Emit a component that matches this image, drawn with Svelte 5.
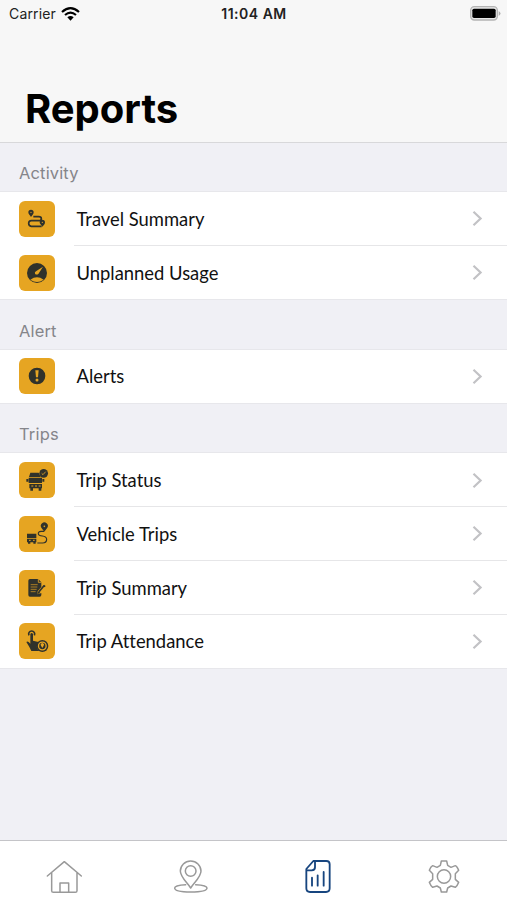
<script>
    // Report groups shown in the list
    const sections = [
        {
            title: "Activity",
            items: [
                { label: "Travel Summary", icon: "travel" },
                { label: "Unplanned Usage", icon: "gauge" },
            ],
        },
        {
            title: "Alert",
            items: [{ label: "Alerts", icon: "alert" }],
        },
        {
            title: "Trips",
            items: [
                { label: "Trip Status", icon: "status" },
                { label: "Vehicle Trips", icon: "vehicle" },
                { label: "Trip Summary", icon: "summary" },
                { label: "Trip Attendance", icon: "attendance" },
            ],
        },
    ];

    const tabs = ["home", "map", "reports", "settings"];
    let activeTab = "reports";
</script>

<div class="screen">
    <header>
        <!-- Status bar -->
        <div class="status-bar">
            <div class="carrier">
                <span>Carrier</span>
                <svg width="19" height="14" viewBox="0 0 57 42">
                    <g fill="none" stroke="#000" stroke-width="6.5">
                        <path d="M3 15 Q28.5 -8 54 15" />
                        <path d="M12 24 Q28.5 10 45 24" />
                    </g>
                    <path d="M19 31 Q28.5 23 38 31 L28.5 41 Z" />
                </svg>
            </div>
            <span class="time">11:04 AM</span>
            <svg class="battery" width="31" height="15" viewBox="0 0 93 45">
                <rect x="2" y="2" width="80" height="40" rx="11" fill="#e8e8e8" stroke="#b4b4b4" stroke-width="4" />
                <rect x="7" y="8" width="70" height="28" rx="5" />
                <path d="M86 15 Q97 22 86 30 Z" fill="#adadad" />
            </svg>
        </div>
        <h1>Reports</h1>
    </header>

    <main>
        {#each sections as section}
            <section>
                <h2>{section.title}</h2>
                <div class="rows">
                    {#each section.items as item}
                        <button class="row">
                            <svg class="tile" viewBox="0 0 108 108">
                                {#if item.icon === "travel"}
                                    <path d="M36 48 C32 42 28 39 28 34 A8 8 0 0 1 44 34 C44 39 40 43 36 48 Z M70 77 C65 70 62 68 62 64 A8 8 0 0 1 78 64 C78 69 75 72 70 77 Z" />
                                    <path d="M43 47 H59 Q67 47 67 53 T59 59 H37 Q29 59 29 67 T37 76 H68" class="line" />
                                    <g fill="#e6a522"><circle cx="36" cy="34" r="2" /><circle cx="70" cy="64" r="2" /></g>
                                {:else if item.icon === "gauge"}
                                    <circle cx="54" cy="54" r="30" />
                                    <path d="M34 74 Q54 60 74 74 Q54 88 34 74 Z" fill="#e6a522" />
                                    <path d="M72 35 L58 57 Q52 61 48 56 Q46 52 51 49 Z" fill="#e6a522" />
                                {:else if item.icon === "alert"}
                                    <circle cx="54" cy="54" r="25" />
                                    <path d="M49 37 H59 L57 58 H51 Z" fill="#e6a522" />
                                    <circle cx="54" cy="66" r="4.5" fill="#e6a522" />
                                {:else if item.icon === "status"}
                                    <path d="M34 32 H59 L65 45 H30 Z M29 47 H69 V63 H29 Z M31 66 H69 V79 H31 Z M34 79 H42 V86 H34 Z M59 79 H67 V86 H59 Z M22 51 H28 V59 H22 Z M70 51 H76 V59 H70 Z" />
                                    <path d="M37 72 H43 M48 72 H54 M59 72 H65" stroke="#e6a522" stroke-width="3" />
                                    <circle cx="74" cy="34" r="13" />
                                    <path d="M68 34 L72 38 L80 29" fill="none" stroke="#e6a522" stroke-width="2.5" />
                                {:else if item.icon === "vehicle"}
                                    <path d="M24 53 H52 V66 H24 Z M24 68 H52 V79 H24 Z M27 78 H34 V83 H27 Z M43 78 H50 V83 H43 Z" />
                                    <path d="M30 73 H35 M42 73 H47" stroke="#e6a522" stroke-width="3" />
                                    <path d="M76 47 L67 35 A10.500 10.500 0 1 1 85 35 Z" />
                                    <circle cx="76" cy="31" r="2.5" fill="#e6a522" />
                                    <path d="M75 46 H66 Q57 47 58 54 Q59 59 70 60 Q83 61 83 71 Q82 81 71 81 H55" class="line thin" />
                                {:else if item.icon === "summary"}
                                    <path d="M33 27 H58 L67 37 V51 L56 64 V73 L67 69 V75 Q67 80 62 80 H33 Q28 80 28 75 V32 Q28 27 33 27 Z" />
                                    <path d="M35 44 H56 M35 51 H55 M35 58 H53 M35 65 H50" stroke="#e6a522" stroke-width="2" />
                                    <path d="M60 65 L75 47" class="line" />
                                    <path d="M56 72 L58 63 L64 69 Z M75 44 L80 48 L77 52 L72 48 Z" />
                                    <path d="M58 27 V37 H67" fill="none" stroke="#e6a522" stroke-width="2.5" />
                                {:else}
                                    <path d="M30 37 A9 9 0 1 1 46 37" class="line" />
                                    <path d="M34 33 Q38 27 42 33 V53 L58 57 Q48 72 60 84 H37 Q33 74 22 57 Q26 53 34 62 Z" />
                                    <circle cx="70" cy="69" r="18" />
                                    <circle cx="70" cy="69" r="11.5" fill="none" stroke="#e6a522" stroke-width="4" />
                                    <path d="M70 75 L66 68 A5 5 0 1 1 74 68 Z" fill="#e6a522" />
                                {/if}
                            </svg>
                            <span class="label">
                                {item.label}
                                <svg class="chevron" width="11" height="17" viewBox="0 0 11 17">
                                    <path d="M1.5 1.7 L8.6 8.5 L1.5 15.3" />
                                </svg>
                            </span>
                        </button>
                    {/each}
                </div>
            </section>
        {/each}
    </main>

    <!-- Bottom tabs -->
    <nav>
        {#each tabs as tab}
            <button class="tab" class:active={activeTab === tab} aria-label={tab} on:click={() => (activeTab = tab)}>
                <svg width="38" height="38" viewBox="0 0 114 114">
                    {#if tab === "home"}
                        <path d="M7 54 L58 11 L109 54 M20 45 V98 Q20 103 25 103 H91 Q96 103 96 98 V45 M45 103 V75 H71 V103" />
                    {:else if tab === "map"}
                        <path d="M56 90 C46 74 25 57 25 39 A31 30 0 0 1 87 39 C87 57 66 74 56 90 Z" />
                        <circle cx="56" cy="39" r="16" />
                        <path d="M41 80 C19 81 8 85 8 90 C8 98 29 102 56 102 S105 98 105 90 C105 85 94 81 71 80" />
                    {:else if tab === "reports"}
                        <path d="M43 9 H82 Q92 9 92 19 V91 Q92 102 81 102 H33 Q22 102 22 91 V33 Z M48 10 V28 Q48 37 38 37 H23 M39 59 V83 M56 52 V83 M74 42 V83" />
                    {:else}
                        <path d="M46 9 H62 L65 22 L75 28 L88 23 Q93 24 98 37 L88 47 V64 L98 73 Q94 84 88 88 L75 84 L65 90 L62 102 H46 L43 90 L33 84 L20 88 Q14 84 10 73 L20 64 V47 L10 37 Q14 26 20 23 L33 28 L43 22 Z" />
                        <circle cx="54" cy="55.5" r="20" />
                    {/if}
                </svg>
            </button>
        {/each}
    </nav>
</div>

<style>
    :global(body) {
        margin: 0;
    }

    .screen {
        display: flex;
        flex-direction: column;
        width: 100%;
        height: 900px;
        background: #f0f0f5;
        font-family: Inter, "Liberation Sans", sans-serif;
        overflow: hidden;
    }

    header {
        box-sizing: border-box;
        height: 143px;
        background: #f7f7f7;
        border-bottom: 1px solid #d8d8da;
    }

    .status-bar {
        display: grid;
        grid-template-columns: 1fr auto 1fr;
        align-items: center;
        height: 27px;
        padding: 0 6px 0 9px;
        font-size: 14px;
        color: #222;
    }

    .carrier {
        display: flex;
        align-items: center;
        gap: 5px;
        letter-spacing: 0.15px;
    }

    .time {
        margin-right: 2px;
        font-weight: 600;
        letter-spacing: 0.5px;
    }

    .battery {
        justify-self: end;
    }

    h1 {
        margin: 58px 0 0 25px;
        font-size: 40px;
        line-height: 48px;
        font-weight: 700;
        color: #000;
    }

    main {
        flex: 1;
    }

    h2 {
        display: flex;
        align-items: flex-end;
        box-sizing: border-box;
        height: 50.2px;
        margin: 0;
        padding: 0 19px 9px;
        font-size: 16.5px;
        line-height: 20px;
        font-weight: 400;
        letter-spacing: 0.15px;
        color: #85858a;
    }

    section:first-child h2 {
        height: 49px;
    }

    .rows {
        background: #fff;
        box-shadow: 0 0 0 1px #e7e7eb;
    }

    .row {
        display: flex;
        align-items: center;
        width: 100%;
        height: 53.7px;
        padding: 0 0 0 18.5px;
        border: 0;
        background: none;
        text-align: left;
    }

    .tile {
        width: 36px;
        height: 36px;
        border-radius: 6px;
        background: #e6a522;
        fill: #30322b;
    }

    .line {
        fill: none;
        stroke: #30322b;
        stroke-width: 5;
    }

    .thin {
        stroke-width: 3.5;
    }

    .label {
        display: flex;
        flex: 1;
        align-items: center;
        justify-content: space-between;
        box-sizing: border-box;
        height: 100%;
        margin-left: 19.5px;
        padding: 1px 24px 0 2.5px;
        border-bottom: 1px solid #e6e6e8;
        font-family: Lato, sans-serif;
        font-size: 18.4px;
        font-variant-ligatures: none;
        color: #111;
    }

    .row:last-child .label {
        border-bottom-color: transparent;
    }

    .chevron {
        fill: none;
        stroke: #c2c2c5;
        stroke-width: 2.2;
    }

    nav {
        display: grid;
        grid-template-columns: repeat(4, 1fr);
        box-sizing: border-box;
        height: 60px;
        background: #fff;
        border-top: 1px solid #c4c4c8;
    }

    .tab {
        display: flex;
        justify-content: center;
        padding: 17px 0 0 2px;
        border: 0;
        background: none;
        fill: none;
        stroke: #999;
        stroke-width: 4.5;
        stroke-linejoin: round;
        stroke-linecap: round;
    }

    .active {
        stroke: #17457f;
        stroke-width: 5.5;
    }
</style>
